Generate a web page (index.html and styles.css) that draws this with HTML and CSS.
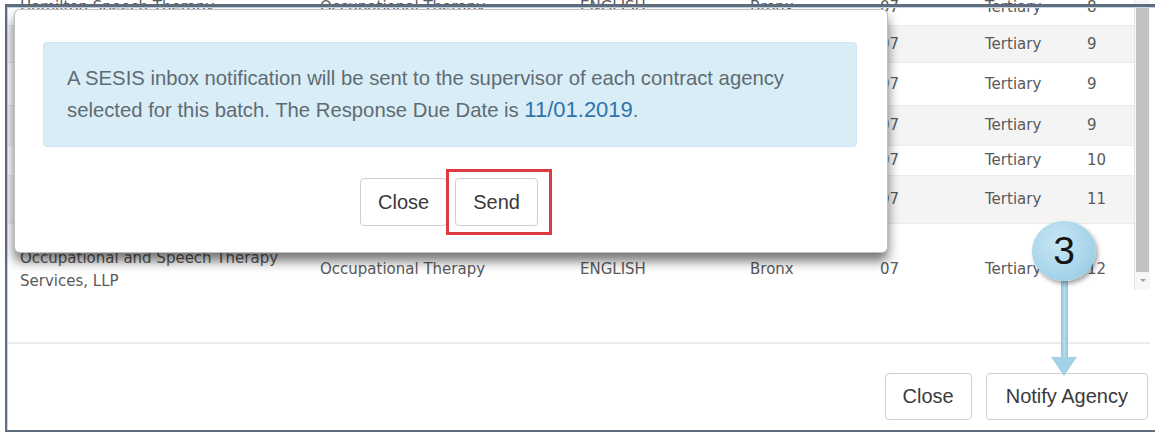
FILE: index.html
```html
<!DOCTYPE html>
<html lang="en">
<head>
<meta charset="utf-8">
<title>Notify Agency</title>
<link rel="stylesheet" href="styles.css">
</head>
<body>
<div class="window">
  <div class="list">
    <div class="rows">
      <table class="grid">
        <colgroup>
          <col class="c-agency"><col class="c-service"><col class="c-lang"><col class="c-boro"><col class="c-dist"><col class="c-tier"><col class="c-rank">
        </colgroup>
        <tbody>
          <tr class="r1"><td>Hamilton Speech Therapy</td><td>Occupational Therapy</td><td>ENGLISH</td><td>Bronx</td><td>07</td><td>Tertiary</td><td>8</td></tr>
          <tr class="r2 alt"><td>Kids Kingdom Therapy</td><td>Occupational Therapy</td><td>ENGLISH</td><td>Bronx</td><td>07</td><td>Tertiary</td><td>9</td></tr>
          <tr class="r3"><td>Bright Steps Pediatric Services</td><td>Occupational Therapy</td><td>ENGLISH</td><td>Bronx</td><td>07</td><td>Tertiary</td><td>9</td></tr>
          <tr class="r4 alt"><td>Little Learners Therapy</td><td>Occupational Therapy</td><td>ENGLISH</td><td>Bronx</td><td>07</td><td>Tertiary</td><td>9</td></tr>
          <tr class="r5"><td>Step Ahead Services</td><td>Occupational Therapy</td><td>ENGLISH</td><td>Bronx</td><td>07</td><td>Tertiary</td><td>10</td></tr>
          <tr class="r6 alt"><td>Growing Minds Therapy</td><td>Occupational Therapy</td><td>ENGLISH</td><td>Bronx</td><td>07</td><td>Tertiary</td><td>11</td></tr>
          <tr class="r7"><td>Occupational and Speech Therapy Services, LLP</td><td>Occupational Therapy</td><td>ENGLISH</td><td>Bronx</td><td>07</td><td>Tertiary</td><td>12</td></tr>
        </tbody>
      </table>
    </div>
    <div class="scrollbar">
      <div class="thumb"></div>
      <div class="down"></div>
    </div>
  </div>

  <div class="footer">
    <button class="btn" type="button">Close</button>
    <button class="btn" type="button">Notify Agency</button>
  </div>

  <div class="edge"></div>

  <div class="dialog" role="dialog">
    <div class="alert">A SESIS inbox notification will be sent to the supervisor of each contract agency selected for this batch. The Response Due Date is <span class="date">11/01.2019</span>.</div>
    <div class="dialog-actions">
      <button class="btn" type="button">Close</button>
      <span class="highlight"><button class="btn" type="button">Send</button></span>
    </div>
  </div>

  <div class="callout">
    <span class="badge">3</span>
    <span class="shaft"></span>
    <span class="head"></span>
  </div>
</div>
</body>
</html>
```

FILE: styles.css
```css
* { box-sizing: border-box; }

html, body {
  margin: 0;
  padding: 0;
  background: #fff;
}

.window {
  position: relative;
  width: 1155px;
  height: 434px;
  overflow: hidden;
  background: #fff;
  font-family: "Liberation Sans", Arial, sans-serif;
}

/* ---------- results list ---------- */
.list {
  display: flex;
  height: 290px;
  padding-left: 8px;
  padding-right: 5px;
}

.rows {
  flex: 1;
  overflow: hidden;
}

.grid {
  width: 1126px;
  margin-top: -11px;
  border-collapse: collapse;
  table-layout: fixed;
  font-family: "DejaVu Sans", Verdana, sans-serif;
  font-size: 15px;
  color: #5a5a5a;
}

.c-agency { width: 300px; }
.c-service { width: 260px; }
.c-lang { width: 170px; }
.c-boro { width: 130px; }
.c-dist { width: 105px; }
.c-tier { width: 102px; }
.c-rank { width: 59px; }

.grid td {
  padding: 0 12px;
  line-height: 23px;
  vertical-align: middle;
  border-top: 1px solid #ececec;
  white-space: normal;
}

.grid tr.alt td { background: #f4f4f4; }

.r1 { height: 36px; }
.r2 { height: 37px; }
.r3 { height: 43px; }
.r4 { height: 40px; }
.r5 { height: 30px; }
.r6 { height: 48px; }
.r7 { height: 92px; }

.scrollbar {
  width: 16px;
  height: 290px;
  border-left: 1px solid #e6e6e6;
  background: #f7f7f7;
  padding: 8px 1px 0 1px;
  display: flex;
  flex-direction: column;
  align-items: center;
}

.thumb {
  width: 13px;
  height: 264px;
  background: #c2c2c2;
}

.down {
  margin-top: 7px;
  width: 0;
  height: 0;
  border-left: 3px solid transparent;
  border-right: 3px solid transparent;
  border-top: 3px solid #a0a0a0;
}

/* ---------- window footer ---------- */
.footer {
  margin-top: 52px;
  margin-left: 8px;
  margin-right: 5px;
  border-top: 2px solid #ececec;
  padding: 29px 2px 0 0;
  display: flex;
  justify-content: flex-end;
  gap: 14px;
}

.btn {
  height: 47px;
  padding: 0 17px;
  font-family: "Liberation Sans", Arial, sans-serif;
  font-size: 20px;
  color: #3a3a3a;
  background: #fff;
  border: 1px solid #cfcfcf;
  border-radius: 4px;
}

.footer .btn:last-child {
  padding: 0 19px;
}

/* frame around the window, drawn over the scrolled rows */
.edge {
  position: absolute;
  top: 4px;
  left: 5px;
  right: -10px;
  bottom: 2px;
  border: 2px solid #5e6d80;
  border-top-width: 3px;
  box-shadow: inset 1px 1px 0 #c9d3de;
  pointer-events: none;
}

/* ---------- confirmation dialog ---------- */
.dialog {
  position: absolute;
  left: 14px;
  top: 9px;
  width: 874px;
  height: 244px;
  padding: 32px 30px 0 28px;
  background: #fff;
  border: 1px solid rgba(0, 0, 0, 0.25);
  border-radius: 6px;
  box-shadow: 0 8px 12px rgba(0, 0, 0, 0.55);
}

.alert {
  height: 105px;
  padding: 19px 20px 0 23px;
  background: #d9edf7;
  border: 1px solid #cde6f1;
  border-radius: 4px;
  font-size: 20.3px;
  line-height: 32px;
  color: #5f6b73;
}

.date {
  font-size: 22px;
  color: #2f72ad;
}

.dialog-actions {
  margin-top: 22px;
  padding-left: 12px;
  display: flex;
  justify-content: center;
  align-items: center;
}

.dialog-actions .btn {
  height: 48px;
}

.highlight {
  display: flex;
  padding: 6px 11px 6px 6px;
  border: 3px solid #df3a40;
  margin-left: -1px;
}

/* ---------- step callout ---------- */
.callout {
  position: absolute;
  left: 1032px;
  top: 221px;
  width: 64px;
  display: flex;
  flex-direction: column;
  align-items: center;
}

.badge {
  width: 64px;
  height: 60px;
  border-radius: 50%;
  background: radial-gradient(circle at 40% 35%, #c8e6f4 0%, #a9d6ea 55%, #93c7e0 100%);
  box-shadow: 2px 3px 4px rgba(0, 0, 0, 0.35);
  display: flex;
  align-items: center;
  justify-content: center;
  font-family: "Liberation Sans", Arial, sans-serif;
  font-size: 39px;
  color: #141414;
  position: relative;
  z-index: 1;
}

.shaft {
  width: 7px;
  height: 76px;
  background: linear-gradient(to right, #92c6df, #b5dcee, #92c6df);
}

.head {
  width: 0;
  height: 0;
  border-left: 13px solid transparent;
  border-right: 13px solid transparent;
  border-top: 19px solid #a3d1e6;
}
```
